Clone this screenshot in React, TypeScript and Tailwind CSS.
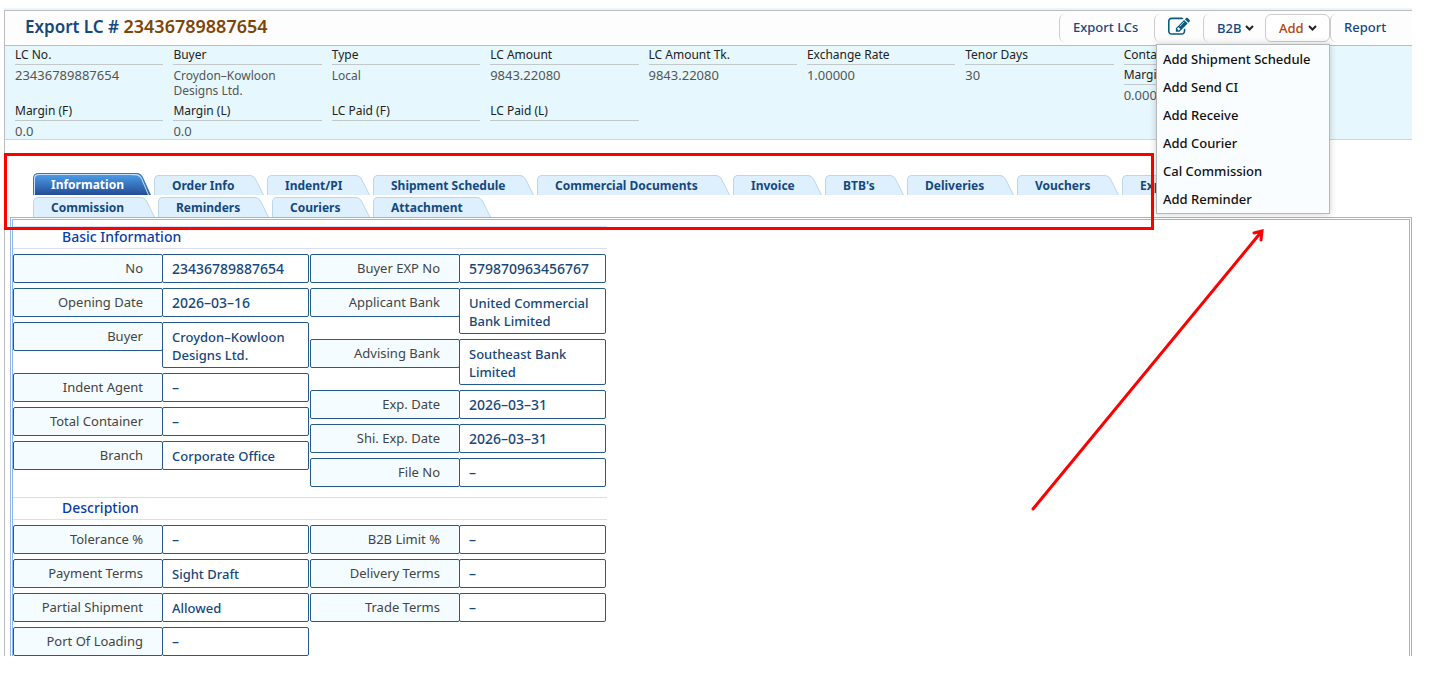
import * as React from 'react';

interface SummaryItemProps {
	label: string;
	value: string;
}

interface FieldProps {
	label: string;
	value: string;
}

interface TabProps {
	label: string;
	width: string;
	active?: boolean;
}

const summary: SummaryItemProps[] = [
	{ label: 'LC No.', value: '23436789887654' },
	{ label: 'Buyer', value: 'Croydon–Kowloon Designs Ltd.' },
	{ label: 'Type', value: 'Local' },
	{ label: 'LC Amount', value: '9843.22080' },
	{ label: 'LC Amount Tk.', value: '9843.22080' },
	{ label: 'Exchange Rate', value: '1.00000' },
	{ label: 'Tenor Days', value: '30' },
];

const margins: SummaryItemProps[] = [
	{ label: 'Margin (F)', value: '0.0' },
	{ label: 'Margin (L)', value: '0.0' },
	{ label: 'LC Paid (F)', value: '' },
	{ label: 'LC Paid (L)', value: '' },
];

const tabRows: TabProps[][] = [
	[
		{ label: 'Information', width: 'w-[118px]', active: true },
		{ label: 'Order Info', width: 'w-[110px]' },
		{ label: 'Indent/PI', width: 'w-[103px]' },
		{ label: 'Shipment Schedule', width: 'w-[161px]' },
		{ label: 'Commercial Documents', width: 'w-[193px]' },
		{ label: 'Invoice', width: 'w-[89px]' },
		{ label: "BTB's", width: 'w-[79px]' },
		{ label: 'Deliveries', width: 'w-[107px]' },
		{ label: 'Vouchers', width: 'w-[102px]' },
		{ label: 'Expenses', width: 'w-[103px]' },
	],
	[
		{ label: 'Commission', width: 'w-[122px]' },
		{ label: 'Reminders', width: 'w-[111px]' },
		{ label: 'Couriers', width: 'w-[98px]' },
		{ label: 'Attachment', width: 'w-[118px]' },
	],
];

const addMenu = [
	'Add Shipment Schedule',
	'Add Send CI',
	'Add Receive',
	'Add Courier',
	'Cal Commission',
	'Add Reminder',
];

const basicLeft: FieldProps[] = [
	{ label: 'No', value: '23436789887654' },
	{ label: 'Opening Date', value: '2026–03–16' },
	{ label: 'Buyer', value: 'Croydon–Kowloon Designs Ltd.' },
	{ label: 'Indent Agent', value: '–' },
	{ label: 'Total Container', value: '–' },
	{ label: 'Branch', value: 'Corporate Office' },
];

const basicRight: FieldProps[] = [
	{ label: 'Buyer EXP No', value: '579870963456767' },
	{ label: 'Applicant Bank', value: 'United Commercial Bank Limited' },
	{ label: 'Advising Bank', value: 'Southeast Bank Limited' },
	{ label: 'Exp. Date', value: '2026–03–31' },
	{ label: 'Shi. Exp. Date', value: '2026–03–31' },
	{ label: 'File No', value: '–' },
];

const descriptionLeft: FieldProps[] = [
	{ label: 'Tolerance %', value: '–' },
	{ label: 'Payment Terms', value: 'Sight Draft' },
	{ label: 'Partial Shipment', value: 'Allowed' },
	{ label: 'Port Of Loading', value: '–' },
];

const descriptionRight: FieldProps[] = [
	{ label: 'B2B Limit %', value: '–' },
	{ label: 'Delivery Terms', value: '–' },
	{ label: 'Trade Terms', value: '–' },
];

// Numbers and dates are set one size larger than words
const isNumeric = (value: string) => /^[\d.–]+$/.test(value);

const SummaryItem = ({ label, value }: SummaryItemProps) => (
	<div>
		<div className="border-b border-[#c3c8ca] pt-px pb-0.5 text-[#222]">{label}</div>
		<div className={`pt-[3px] text-[#555] ${isNumeric(value) ? 'text-[13px] leading-[15px]' : ''}`}>
			{value}
		</div>
	</div>
);

const Caret = () => (
	<svg className="h-[6px] w-[9px]" viewBox="0 0 9 6" fill="none">
		<path d="M1 1l3.5 3.5L8 1" stroke="#222" strokeWidth="2" />
	</svg>
);

const EditIcon = () => (
	<svg className="size-[22px]" viewBox="0 0 1792 1792" fill="#075a80">
		<path d="M888 1184l116-116-152-152-116 116v56h96v96h56zm440-720q-16-16-33 1l-350 350q-17 17-1 33t33-1l350-350q17-17 1-33zm80 594v190q0 119-84.500 203.500t-203.500 84.500h-832q-119 0-203.500-84.500t-84.500-203.500v-832q0-119 84.500-203.500t203.500-84.500h832q63 0 117 25 15 7 18 23 3 17-9 29l-49 49q-14 14-32 8-23-6-45-6h-832q-66 0-113 47t-47 113v832q0 66 47 113t113 47h832q66 0 113-47t47-113v-126q0-13 9-22l64-64q15-15 35-7t20 29zm-96-738l288 288-672 672h-288v-288zm444 132l-92 92-288-288 92-92q28-28 68-28t68 28l152 152q28 28 28 68t-28 68z" />
	</svg>
);

const Tab = ({ label, width, active }: TabProps) => (
	<button
		type="button"
		role="tab"
		aria-selected={!!active}
		className={`flex text-left text-xs leading-5 font-bold ${width} ${active ? 'h-[22px] text-white' : 'h-5 text-[#15487d]'}`}
	>
		<span
			className={`h-full flex-1 rounded-tl-[5px] border-t border-l pl-[17px] whitespace-nowrap ${
				active
					? 'border-[#3a77b8] bg-linear-to-b from-[#4f9fec] to-[#234d95] pt-px shadow-[inset_1px_1px_0_#c5e0f8]'
					: 'border-[#bcd6e6] bg-[#def0fe]'
			}`}
		>
			{label}
		</span>
		<svg className="h-full w-[19px] shrink-0" viewBox="0 0 19 20" preserveAspectRatio="none">
			<defs>
				<linearGradient id="activeTab" x1="0" y1="0" x2="0" y2="1">
					<stop offset="0" stopColor="#4f9fec" />
					<stop offset="1" stopColor="#234d95" />
				</linearGradient>
			</defs>
			<path d="M0 0H4Q9 0 11 5L18.500 20H0Z" fill={active ? 'url(#activeTab)' : '#def0fe'} />
			<path d="M0 .5H4Q9 .5 11 5L18.500 20" fill="none" stroke={active ? '#3a77b8' : '#bcd6e6'} />
			{active && <path d="M0 1.500H3Q8 1.500 10 6L16.500 20" fill="none" stroke="#c5e0f8" />}
		</svg>
	</button>
);

const Field = ({ label, value }: FieldProps) => (
	<div className="flex items-start">
		<dt className="h-[29px] w-[150px] shrink-0 rounded-xs border border-[#255b89] bg-[#f4fcff] pt-1 pr-[19px] text-right text-[#444]">
			{label}
		</dt>
		<dd
			className={`-ml-px min-h-[29px] flex-1 rounded-xs border border-[#255b89] bg-white pt-[5px] pb-[3px] pl-[9px] font-medium text-[#15487d] ${
				isNumeric(value) ? 'text-sm leading-[18px]' : 'pr-1'
			}`}
		>
			{value}
		</dd>
	</div>
);

const FieldSection = ({ title, left, right }: { title: string; left: FieldProps[]; right: FieldProps[] }) => (
	<section className="w-[594px]">
		<h2 className="mb-[5px] border-y border-[#dcdcf0] pb-px pl-[49px] text-sm leading-5 font-medium text-[#0a3ea8]">
			{title}
		</h2>
		<div className="grid grid-cols-2 items-start gap-x-px pr-px text-[13px] leading-[18px]">
			<dl className="flex flex-col gap-[5px]">
				{left.map((field) => (
					<Field key={field.label} {...field} />
				))}
			</dl>
			<dl className="flex flex-col gap-[5px]">
				{right.map((field) => (
					<Field key={field.label} {...field} />
				))}
			</dl>
		</div>
	</section>
);

const Header = () => (
	<header className="flex h-[36px] justify-between border-y border-[#bcbcbc] bg-[#fdfdfd]">
		<h1 className="pl-5 text-[17px] leading-[30px] font-semibold text-[#15487d]">
			Export LC # <span className="text-lg leading-[30px] text-[#7d4608]">23436789887654</span>
		</h1>
		<nav className="flex pt-[3px] text-[13px] leading-[27px] font-medium text-[#15487d]">
			<a href="#export-lcs" className="h-[28px] w-[95px] rounded-l-md border-l border-[#ccc] pl-[13px]">
				Export LCs
			</a>
			<a
				href="#edit"
				aria-label="Edit"
				className="h-[28px] w-[49px] rounded-l-md border-l border-[#ccc] pt-[2px] pl-[13px]"
			>
				<EditIcon />
			</a>
			<button
				type="button"
				className="flex h-[28px] w-[62px] items-center gap-1 rounded-l-md border-l border-[#ccc] pl-[13px]"
			>
				B2B <Caret />
			</button>
			<div className="relative">
				<button
					type="button"
					aria-expanded="true"
					className="flex h-[28px] w-[65px] items-center gap-1 rounded-md border border-[#ccc] bg-white pl-[13px] text-[#b84208]"
				>
					Add <Caret />
				</button>
				<ul className="absolute top-[30px] right-0 z-20 w-[174px] border border-[#b5b8bb] bg-[#fafdff] shadow-[0_0_7px_rgba(0,0,0,0.2)]">
					{addMenu.map((item) => (
						<li key={item}>
							<a href="#add" className="block pl-1.5 leading-7 whitespace-nowrap text-[#111]">
								{item}
							</a>
						</li>
					))}
				</ul>
			</div>
			<a href="#report" className="h-[28px] w-[82px] rounded-l-md border-l border-[#ccc] pl-[13px]">
				Report
			</a>
		</nav>
	</header>
);

// Red frame round the tabs and the arrow that points at the open menu
const Annotations = () => (
	<>
		<div className="pointer-events-none absolute top-[153px] left-1 z-10 h-[77px] w-[1150px] border-3 border-[#fe0000]" />
		<svg
			className="pointer-events-none absolute top-[225px] left-[1025px] z-10 h-[290px] w-[245px]"
			viewBox="0 0 245 290"
			fill="none"
			stroke="#fe0000"
			strokeWidth="3"
			strokeLinecap="round"
		>
			<path d="M8 284L237 6M229 8L237 6L236 15" />
		</svg>
	</>
);

export default function App() {
	return (
		<div className="relative bg-white pt-2 pr-[22px] pl-1 font-['Noto_Sans','Open_Sans',sans-serif]">
			<div className="border-t-2 border-[#e6f8fd]">
				<div className="border-l border-[#bcbcbc]">
					<Header />
					<div className="grid grid-cols-8 gap-x-2.5 gap-y-1 border-b border-[#ccd5d8] bg-[#e6f8fd] pr-[140px] pl-2.5 text-xs leading-[15px]">
						{summary.map((item) => (
							<SummaryItem key={item.label} {...item} />
						))}
						<div className="row-span-2">
							<div className="border-b border-[#c3c8ca] pt-px pb-0.5 text-[#222]">Container</div>
							<div className="pt-px">
								<SummaryItem label="Margin" value="0.000" />
							</div>
						</div>
						{margins.map((item) => (
							<SummaryItem key={item.label} {...item} />
						))}
					</div>
					<div role="tablist" className="flex flex-col gap-0.5 pt-[33px] pl-7">
						{tabRows.map((row, i) => (
							<div key={i} className="flex items-end gap-[3px]">
								{row.map((tab) => (
									<Tab key={tab.label} {...tab} />
								))}
							</div>
						))}
					</div>
					<main className="ml-[5px] flex flex-col gap-2.5 border-3 border-b-0 border-double border-[#8fb9e6] pt-[6px]">
						<FieldSection title="Basic Information" left={basicLeft} right={basicRight} />
						<FieldSection title="Description" left={descriptionLeft} right={descriptionRight} />
					</main>
				</div>
			</div>
			<Annotations />
		</div>
	);
}
